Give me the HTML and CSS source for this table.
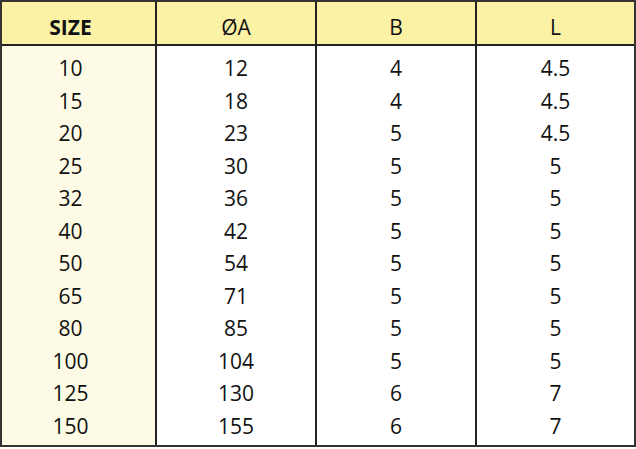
FILE: index.html
```html
<!DOCTYPE html>
<html>
<head>
<meta charset="utf-8">
<link rel="stylesheet" href="styles.css">
</head>
<body>
<div class="spec">
  <div class="head">
    <div class="hc c1 bold">SIZE</div>
    <div class="hc">ØA</div>
    <div class="hc">B</div>
    <div class="hc last">L</div>
  </div>
  <div class="body">
    <div class="col c1">
      <div>10</div><div>15</div><div>20</div><div>25</div><div>32</div><div>40</div>
      <div>50</div><div>65</div><div>80</div><div>100</div><div>125</div><div>150</div>
    </div>
    <div class="col">
      <div>12</div><div>18</div><div>23</div><div>30</div><div>36</div><div>42</div>
      <div>54</div><div>71</div><div>85</div><div>104</div><div>130</div><div>155</div>
    </div>
    <div class="col">
      <div>4</div><div>4</div><div>5</div><div>5</div><div>5</div><div>5</div>
      <div>5</div><div>5</div><div>5</div><div>5</div><div>6</div><div>6</div>
    </div>
    <div class="col last">
      <div>4.5</div><div>4.5</div><div>4.5</div><div>5</div><div>5</div><div>5</div>
      <div>5</div><div>5</div><div>5</div><div>5</div><div>7</div><div>7</div>
    </div>
  </div>
</div>
<div class="edge"></div>
</body>
</html>
```
FILE: styles.css
```css
html, body {
  margin: 0;
  padding: 0;
  background: #ffffff;
}
.spec {
  width: 636px;
  box-sizing: border-box;
  border: 2px solid #333333;
  font-family: "Open Sans", "Liberation Sans", sans-serif;
  font-size: 21px;
  color: #111111;
}
.head, .body {
  display: grid;
  grid-template-columns: 155px 160px 160px 157px;
}
.head {
  height: 44px;
  box-sizing: border-box;
  border-bottom: 2px solid #222222;
  background: #fbf2a6;
}
.hc {
  text-align: center;
  border-right: 2px solid #222222;
  line-height: 30px;
  padding-top: 10px;
}
.hc.bold {
  font-weight: bold;
}
.last {
  border-right: none;
}
.c1 {
  padding-right: 16px;
}
.col {
  text-align: center;
  border-right: 2px solid #222222;
  padding: 6px 0 3px;
  line-height: 32.5px;
  background: #ffffff;
}
.col.c1 {
  background: #fdfbe6;
  padding-right: 16px;
}
.col.last {
  border-right: none;
}
.edge {
  height: 2px;
  border-bottom: 1px solid #c9d3e0;
}
```
